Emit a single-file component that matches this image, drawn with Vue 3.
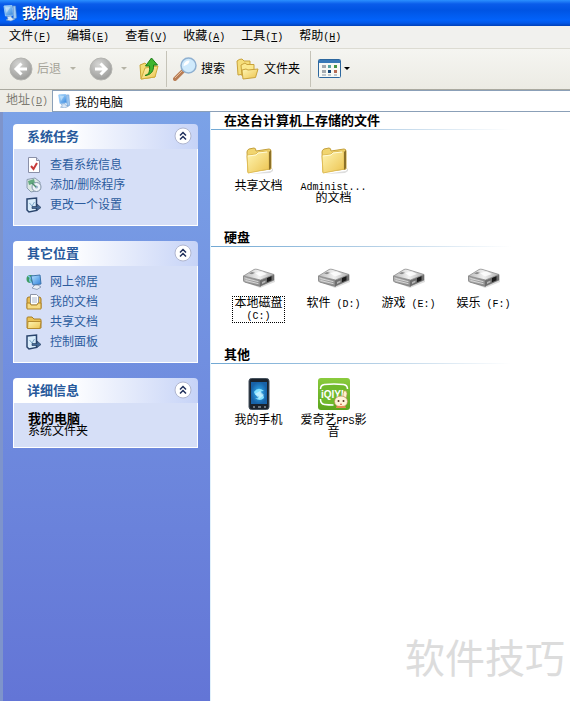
<script setup>
import { ref } from 'vue'

const address = ref('我的电脑')

const menus = [
  { text: '文件', key: 'F' },
  { text: '编辑', key: 'E' },
  { text: '查看', key: 'V' },
  { text: '收藏', key: 'A' },
  { text: '工具', key: 'T' },
  { text: '帮助', key: 'H' }
]

const panels = [
  {
    title: '系统任务',
    links: [
      { text: '查看系统信息', icon: 'info' },
      { text: '添加/删除程序', icon: 'programs' },
      { text: '更改一个设置', icon: 'settings' }
    ]
  },
  {
    title: '其它位置',
    links: [
      { text: '网上邻居', icon: 'network' },
      { text: '我的文档', icon: 'documents' },
      { text: '共享文档', icon: 'shared' },
      { text: '控制面板', icon: 'settings' }
    ]
  },
  { title: '详细信息', details: { name: '我的电脑', type: '系统文件夹' } }
]

const groups = [
  {
    title: '在这台计算机上存储的文件',
    items: [
      { lines: ['共享文档'], icon: 'folder' },
      { lines: ['Administ...', '的文档'], icon: 'folder' }
    ]
  },
  {
    title: '硬盘',
    items: [
      { lines: ['本地磁盘', '(C:)'], icon: 'drive', focused: true },
      { lines: ['软件 (D:)'], icon: 'drive' },
      { lines: ['游戏 (E:)'], icon: 'drive' },
      { lines: ['娱乐 (F:)'], icon: 'drive' }
    ]
  },
  {
    title: '其他',
    items: [
      { lines: ['我的手机'], icon: 'phone' },
      { lines: ['爱奇艺PPS影', '音'], icon: 'iqiyi' }
    ]
  }
]

// half-width characters are set in the mono face, so split them off
const runs = (line) =>
  line.match(/[\x20-\x7e]+|[^\x20-\x7e]+/g).map((text) => ({ text, latin: /^[\x20-\x7e]/.test(text) }))
</script>

<template>
  <div class="window">
    <svg class="defs" width="0" height="0" aria-hidden="true">
      <defs>
        <linearGradient id="gold" x1="0" y1="0" x2="1" y2="1">
          <stop offset="0" stop-color="#fff6b4" />
          <stop offset="1" stop-color="#ecc34f" />
        </linearGradient>
        <linearGradient id="screen" x1="0" y1="0" x2="1" y2="1">
          <stop offset="0" stop-color="#b8e4ff" />
          <stop offset="1" stop-color="#2f80dc" />
        </linearGradient>
        <radialGradient id="disc" cx=".4" cy=".3" r=".75">
          <stop offset="0" stop-color="#d6d6d4" />
          <stop offset="1" stop-color="#989896" />
        </radialGradient>
        <linearGradient id="metal" x1="0" y1="0" x2="1" y2="0">
          <stop offset="0" stop-color="#b4b4b4" />
          <stop offset="1" stop-color="#8c8c8c" />
        </linearGradient>
        <linearGradient id="lid" x1="0" y1="0" x2="1" y2="0">
          <stop offset="0" stop-color="#b9b9b9" />
          <stop offset=".5" stop-color="#f0f0f0" />
          <stop offset="1" stop-color="#b0b0b0" />
        </linearGradient>
        <radialGradient id="glow">
          <stop offset="0" stop-color="#35b5f5" />
          <stop offset="1" stop-color="#1762a8" />
        </radialGradient>
        <linearGradient id="green" x1="0" y1="0" x2="0" y2="1">
          <stop offset="0" stop-color="#8acb3d" />
          <stop offset="1" stop-color="#5ba51c" />
        </linearGradient>
        <symbol id="computer" viewBox="0 0 16 16">
          <path d="M2 1 10 .5 11.500 10 3.500 11z" fill="url(#screen)" stroke="#8fc4f5" />
          <path d="M11 1h2.500l1 12-3 1z" fill="#9fcaf5" stroke="#5e8fc8" stroke-width=".6" />
          <path d="m5 11.500 4-.5 1 2 3 1-4 2-5-1 2-1z" fill="#d8e7f7" stroke="#6c95c4" stroke-width=".6" />
          <path d="m3.500 2.500 5-.5-4 6z" fill="#fff" opacity=".4" />
        </symbol>
      </defs>
    </svg>

    <header class="titlebar">
      <svg width="16" height="18"><use href="#computer" /></svg>
      <h1>我的电脑</h1>
    </header>

    <nav class="menubar">
      <button v-for="menu in menus" :key="menu.key" type="button">
        {{ menu.text }}<span class="latin">(<u>{{ menu.key }}</u>)</span>
      </button>
    </nav>

    <div class="toolbar">
      <button type="button" class="tool disabled">
        <svg width="24" height="24" viewBox="0 0 24 24">
          <circle cx="12" cy="12" r="11" fill="url(#disc)" stroke="#b4b4b0" />
          <path d="M18 12H7m5.500-5.500L7 12l5.500 5.500" fill="none" stroke="#fff" stroke-width="3" />
        </svg>
        后退
      </button>
      <svg class="drop" width="6" height="4"><path d="M0 0h6L3 3z" fill="#b5b3a6" /></svg>
      <button type="button" class="tool forward" aria-label="前进">
        <svg width="24" height="24" viewBox="0 0 24 24">
          <circle cx="12" cy="12" r="11" fill="url(#disc)" stroke="#b4b4b0" />
          <path d="M6 12h11m-5.500-5.500L17 12l-5.500 5.500" fill="none" stroke="#fff" stroke-width="3" />
        </svg>
      </button>
      <svg class="drop" width="6" height="4"><path d="M0 0h6L3 3z" fill="#b5b3a6" /></svg>
      <button type="button" class="tool up" aria-label="向上">
        <svg width="20" height="24" viewBox="0 0 20 24">
          <path d="M1 8l5-2 2 2 8-1v13L2 22z" fill="#f3dc74" stroke="#c9a334" />
          <path d="m2 22 4-11 13-2-3 11z" fill="url(#gold)" stroke="#d0ac3c" />
          <path d="M6 18.500c4-1 5-4 4.500-9.500H6.500L12.500 1l6 7H14.500c.5 6-2.500 10-8.500 10.500z" fill="#3fb52f" stroke="#1c7d18" />
        </svg>
      </button>
      <span class="separator"></span>
      <button type="button" class="tool search">
        <svg width="24" height="24" viewBox="0 0 24 24">
          <path d="m2 22 8-8" stroke="#b87d55" stroke-width="4" stroke-linecap="round" />
          <path d="m2 21 7-7" stroke="#e8bd98" stroke-width="1" />
          <circle cx="15.500" cy="8.500" r="7.500" fill="#cfeafc" stroke="#8fb0d0" stroke-width="1.500" />
          <path d="M10.500 9a5.500 5.500 0 0 1 6-5.500c0 3-3 5-6 5.500z" fill="#fff" />
        </svg>
        搜索
      </button>
      <button type="button" class="tool folders">
        <svg width="24" height="22" viewBox="0 0 24 22">
          <path d="M1 3q2-2 5-2l2 2h6v12L2 17z" fill="#f5de7a" stroke="#c9a23a" />
          <path d="M5 7l4-2 2 1.500h7V17l-12 1z" fill="#fbe98f" stroke="#c9a23a" />
          <path d="M6 12l4-1 2 1 10-1-2.500 8.500L7 21z" fill="url(#gold)" stroke="#c9a23a" />
        </svg>
        文件夹
      </button>
      <span class="separator last"></span>
      <button type="button" class="tool views" aria-label="查看">
        <svg width="24" height="20" viewBox="0 0 24 20">
          <rect x=".5" y=".5" width="22" height="18" rx="1" fill="#f8f9f5" stroke="#2d679e" />
          <path d="M1 1h21v3H1z" fill="#3879b7" />
          <path d="M4 6h4v3H4zm0 5h4v3H4z" fill="#a4aab0" />
          <path d="M10 6h3v3h-3z" fill="#58a5a1" />
          <path d="M10 11h3v3h-3z" fill="#174878" />
          <path d="M16 6h3v3h-3z" fill="#459446" />
          <path d="M16 11h3v3h-3z" fill="#b66b53" />
          <path d="M4 16h4m2 0h3m3 0h3" stroke="#8d98a5" />
        </svg>
        <svg width="6" height="4"><path d="M0 0h6L3 3z" fill="#000" /></svg>
      </button>
    </div>

    <div class="addressbar">
      <label for="address">地址<span class="latin">(<u>D</u>)</span></label>
      <div class="field">
        <svg width="14" height="16" viewBox="0 0 16 16"><use href="#computer" /></svg>
        <input id="address" v-model="address" type="text">
      </div>
    </div>

    <div class="content">
      <aside class="sidebar">
        <section v-for="panel in panels" :key="panel.title" class="panel">
          <header>
            <h2>{{ panel.title }}</h2>
            <button type="button" class="collapse" aria-label="折叠">
              <svg width="18" height="18" viewBox="0 0 18 18">
                <circle cx="9" cy="9" r="8" fill="#fff" stroke="#b0b6cf" />
                <path d="m6 8.500 3-3 3 3m-6 4 3-3 3 3" fill="none" stroke="#20305c" stroke-width="1.500" />
              </svg>
            </button>
          </header>
          <ul v-if="panel.links">
            <li v-for="link in panel.links" :key="link.text">
              <a href="#">
                <svg width="16" height="16" viewBox="0 0 16 16">
                  <template v-if="link.icon === 'info'">
                    <path d="M2.500.5h8l3 3v12h-11z" fill="#fff" stroke="#8a90a8" />
                    <path d="M10.500.5v3h3" fill="#d3daf0" stroke="#8a90a8" />
                    <path d="m5 9 2.500 3L11 6" fill="none" stroke="#c73b3b" stroke-width="2" />
                  </template>
                  <template v-else-if="link.icon === 'programs'">
                    <path d="M1 2.500 9 1l5 4v8l-9 2-4-4z" fill="#dce8e4" stroke="#8a9cae" />
                    <path d="m2 4 6-2 1 4-6 2z" fill="#63a87e" />
                    <circle cx="10.500" cy="10" r="4.500" fill="#eef3f8" stroke="#8294aa" />
                    <circle cx="10.500" cy="10" r="1.500" fill="#9bb4cf" />
                    <path d="m6 6 4 4" stroke="#4c8d6b" stroke-width="1.500" />
                  </template>
                  <template v-else-if="link.icon === 'settings'">
                    <path d="m1 2 9.500-1v12.500L3 15l-2-2z" fill="#d9ecfb" stroke="#2b456d" stroke-width="1.500" />
                    <path d="m3.500 6 2.500 3 2.500-4" fill="none" stroke="#80a9c8" />
                    <path d="M6 9.500h5V7l4 3.500-4 3v-2H6z" fill="#476b97" stroke="#294365" stroke-width=".7" />
                  </template>
                  <template v-else-if="link.icon === 'network'">
                    <circle cx="4.500" cy="5" r="4" fill="#3d9c63" />
                    <path d="M2 2q3 1 2 3T6 9" fill="none" stroke="#7bc4e4" stroke-width="1.500" />
                    <path d="m5 2 9-1 1 9-8 1z" fill="url(#screen)" stroke="#3c74ac" />
                    <path d="M9 11h3l3 2-4 2.500L6 14z" fill="#e7edf6" stroke="#7586a4" stroke-width=".7" />
                  </template>
                  <template v-else-if="link.icon === 'documents'">
                    <path d="M1 5q0-2 2-2h10q2 0 2 2v9H1z" fill="#e8bd54" stroke="#a47822" />
                    <path d="M4.500.5h6l2 2V11h-8z" fill="#fff" stroke="#8d95a8" />
                    <path d="M6 4h5M6 6h5M6 8h5" stroke="#a9b6cf" />
                    <path d="M1 9h3l1 2h6l1-2h3v6H1z" fill="#f6db84" stroke="#b28629" />
                  </template>
                  <template v-else>
                    <path d="M1 4q0-1 1-1h4l2 2h6q1 0 1 1v8H1z" fill="#e9c155" stroke="#a87e28" />
                    <path d="M1.500 14.500 2 7.500h13l-1 7z" fill="url(#gold)" stroke="#b58b2f" />
                  </template>
                </svg>
                {{ link.text }}
              </a>
            </li>
          </ul>
          <div v-else class="details">
            <strong>{{ panel.details.name }}</strong>
            <p>{{ panel.details.type }}</p>
          </div>
        </section>
      </aside>

      <main>
        <section v-for="group in groups" :key="group.title" class="group">
          <h2>{{ group.title }}</h2>
          <div class="items">
            <a v-for="item in group.items" :key="item.lines[0]" href="#" class="item">
              <svg width="32" height="32" viewBox="0 0 32 32">
                <template v-if="item.icon === 'folder'">
                  <path d="M7 30 28 27l2-3v3l-3 2z" fill="#ddd" />
                  <path d="M4 8q0-2 2-3l5-1q2 0 2 3l13-2q2 0 2 2v18L5 28z" fill="#f1d56f" stroke="#c4a03c" />
                  <path d="M4 12q0-1 1-1l8-1 2-2 10-1q1 0 1 1v17L5 29z" fill="url(#gold)" stroke="#e0bd56" />
                  <path d="m26 8 2-2v18l-2 2z" fill="#8c7128" />
                  <path d="m5 12 8-1 2-2 9-1" fill="none" stroke="#fffbd8" />
                </template>
                <template v-else-if="item.icon === 'drive'">
                  <path d="m2 21 15 6 15-6v-2l-15-3z" fill="#dedede" />
                  <path d="m.5 15 17 4v6.500L1.500 21q-1-.5-1-2z" fill="url(#metal)" stroke="#7a7a7a" stroke-width=".8" />
                  <path d="M17.500 19 31 13.500v5.500l-13.500 6z" fill="#6e6e6e" stroke="#666" stroke-width=".6" />
                  <path d="M.5 15 11 8.500q1-.5 3-.2l17 5.200L17.500 19z" fill="url(#lid)" stroke="#8e8e8e" stroke-width=".8" />
                  <path d="m2.500 17.500 13 3.200M2.500 19.500l13 3.200" stroke="#dedede" stroke-width=".9" />
                  <path d="m24 17 4.500-1.800v4L24 21.200z" fill="#1c1c1c" />
                  <path d="m19 21 3.500-1.500v1.800L19 23z" fill="#b5b5b5" />
                  <path d="m6 12.500 3-1.600 3 .8-3 1.600z" fill="#8a8a8a" />
                  <path d="m12 12 7-1.500 5 2.500-7 2.500z" fill="#fff" opacity=".8" />
                </template>
                <template v-else-if="item.icon === 'phone'">
                  <rect x="6" y=".5" width="20" height="31" rx="2.500" fill="#1a222c" stroke="#46525e" />
                  <path d="M8 4h16v22H8z" fill="url(#glow)" />
                  <path d="M11 14q4-6 10-1-5 0-3 3 3 1 3 4-4 4-9 0 5 1 4-2-4 0-5-4z" fill="#85e1ff" />
                  <path d="m12 16 5-3 4 4-5 4z" fill="#dff8ff" opacity=".6" />
                  <path d="M10 29h2m3 0h3m3 0h2" stroke="#bdc8d1" />
                </template>
                <template v-else>
                  <rect width="32" height="32" rx="3" fill="url(#green)" />
                  <path d="M6 7q10-2 20 0 3 1 3 9t-3 10H6q-3-1-3-10t3-9z" fill="#70b92c" />
                  <path d="M2.500 11q0-4 4-4.500 9.500-1 19 0 4 .5 4 4.500M2.500 21q0 5 4 5.500 4 .5 9 .5" fill="none" stroke="#fff" stroke-width="1.500" />
                  <text x="3" y="20" class="logo">iQIYI</text>
                  <path d="M25 18q0-6 3-5 2 2 0 7" fill="#fff1cf" stroke="#bd8f54" stroke-width=".6" />
                  <ellipse cx="23" cy="23.500" rx="6.500" ry="5.500" fill="#fff4da" stroke="#ba8750" stroke-width=".7" />
                  <path d="M18 30q0-3 5-2 5-1 5 2z" fill="#e58a55" />
                  <circle cx="20.500" cy="23" r="1" fill="#5c3520" />
                  <circle cx="25.500" cy="23" r="1" fill="#5c3520" />
                  <path d="M22 26q1 1 2 0" fill="none" stroke="#d35c3d" />
                </template>
              </svg>
              <span class="name" :class="{ focused: item.focused }">
                <span v-for="line in item.lines" :key="line" class="line"><span
                  v-for="run in runs(line)" :key="run.text" :class="{ latin: run.latin }">{{ run.text }}</span></span>
              </span>
            </a>
          </div>
        </section>
      </main>
    </div>

    <div class="watermark">软件技巧</div>
  </div>
</template>

<style>
body {
  margin: 0;
}
</style>

<style scoped>
* {
  box-sizing: border-box;
}

.window {
  position: relative;
  display: flex;
  flex-direction: column;
  min-height: 100vh;
  background: #fff;
  color: #000;
  font: 12px/12px "Liberation Sans", "Noto Sans CJK SC", sans-serif;
}

.defs {
  position: absolute;
}

svg {
  flex: none;
}

h1, h2, p, ul {
  margin: 0;
  padding: 0;
}

button, input {
  padding: 0;
  border: 0;
  background: none;
  color: inherit;
  font: inherit;
}

a {
  color: inherit;
  text-decoration: none;
}

.latin {
  font-family: "Liberation Mono", monospace;
  font-size: 10px;
  white-space: pre;
}

.titlebar {
  display: flex;
  align-items: center;
  gap: 4px;
  height: 26px;
  padding-left: 2px;
  background: linear-gradient(#2b90ff 0, #0a5cea 4px, #0054e3 10px, #0262fa 20px, #0458e8 23px, #0040b8);
}

.titlebar h1 {
  color: #fff;
  font-size: 14px;
  line-height: 20px;
  text-shadow: 1px 1px #0a2c80;
}

.menubar {
  display: flex;
  height: 23px;
  padding-left: 1px;
  background: #f1f1ee;
  border-bottom: 1px solid #dcdbd2;
}

.menubar button {
  padding: 0 8px;
}

.toolbar {
  display: flex;
  align-items: center;
  height: 41px;
  padding-left: 9px;
  background: linear-gradient(#f5f5f1, #ecebe4);
  border-bottom: 1px solid #aaa99f;
}

.tool {
  display: flex;
  align-items: center;
  gap: 4px;
}

.disabled {
  color: #a5a399;
}

.drop {
  margin-left: 9px;
}

.forward {
  margin-left: 13px;
}

.forward + .drop {
  margin-left: 8px;
}

.up {
  margin-left: 12px;
}

.separator {
  height: 36px;
  margin-left: 7px;
  border-left: 1px solid #c5c3b8;
}

.search {
  margin-left: 6px;
}

.folders {
  margin-left: 11px;
}

.separator.last {
  margin-left: 10px;
}

.views {
  margin-left: 7px;
  gap: 2px;
}

.addressbar {
  display: flex;
  align-items: center;
  height: 22px;
  background: #eeede7;
}

.addressbar label {
  width: 52px;
  padding-left: 6px;
  color: #7d7b72;
}

.field {
  display: flex;
  flex: 1;
  align-items: center;
  gap: 4px;
  height: 22px;
  padding-left: 4px;
  background: #fff;
  border: 1px solid #8ba0b8;
  border-right: 0;
}

.field input {
  flex: 1;
  min-width: 0;
  height: 18px;
  outline: 0;
}

.content {
  display: flex;
  flex: 1;
}

.sidebar {
  display: flex;
  flex: none;
  flex-direction: column;
  gap: 15px;
  width: 210px;
  padding: 12px 12px 12px 10px;
  background: linear-gradient(#7ba2e7, #6375d6);
  border-left: 3px solid #7e94cb;
}

.panel header {
  display: flex;
  align-items: center;
  justify-content: space-between;
  height: 25px;
  padding: 0 6px 0 14px;
  background: linear-gradient(90deg, #fff 30%, #c6d3f7);
  border-radius: 4px 4px 0 0;
}

.panel h2 {
  color: #285a9c;
  font-size: 13px;
}

.collapse {
  height: 20px;
}

.panel ul,
.details {
  background: #d6dff7;
  border: 1px solid #fff;
  border-top: 0;
}

.panel ul {
  padding: 6px 12px 10px;
  list-style: none;
}

.panel li a {
  display: flex;
  align-items: center;
  gap: 8px;
  height: 20px;
  color: #2c5c9e;
}

.details {
  padding: 10px 14px;
}

.details strong {
  display: block;
  font-size: 13px;
}

main {
  flex: 1;
  min-width: 0;
  border-left: 1px solid #e0f0fb;
}

.group {
  min-height: 117px;
}

.group h2 {
  height: 18px;
  padding-left: 13px;
  background: linear-gradient(90deg, #70a8d4, #b5d0e6 55%, #fff) left bottom / 300px 1px no-repeat;
  font-size: 13px;
  line-height: 17px;
}

.items {
  display: flex;
  flex-wrap: wrap;
  padding: 14px 0 0 10px;
}

.item {
  display: flex;
  flex-direction: column;
  align-items: center;
  gap: 4px;
  width: 75px;
}

.name {
  padding: 0 1px;
  text-align: center;
}

.line {
  display: block;
  height: 12px;
  white-space: nowrap;
}

.focused {
  padding-bottom: 1px;
  outline: 1px dotted #000;
}

.logo {
  fill: #fff;
  font: bold 10px "Liberation Sans", sans-serif;
}

.watermark {
  position: absolute;
  right: 5px;
  bottom: 22px;
  color: #dcdcdc;
  font-size: 40px;
  line-height: 40px;
  pointer-events: none;
}
</style>
